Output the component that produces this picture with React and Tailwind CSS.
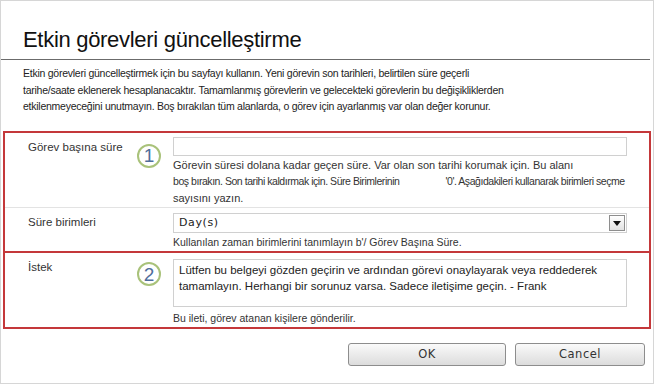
import React from 'react'

const font = { fontFamily: '"Liberation Sans", Arial, sans-serif' }

const Step = ({ n }) => (
  <div className="w-[24px] h-[24px] rounded-full border-2 border-[#a9c27a] bg-white flex items-center justify-center text-[19px] leading-none text-[#4f6d9a] font-light">
    {n}
  </div>
)

const Row = ({ label, step, stepTop, children, last }) => (
  <div className={`flex ${last ? '' : 'border-b border-[#e3e3e3]'}`}>
    <div className="w-[168px] shrink-0 flex pl-[23px] pr-[12px] pt-[5px]">
      <div className="flex-1 text-[11.5px] text-[#333] pt-[1px]">{label}</div>
      {step && <div className={stepTop}><Step n={step} /></div>}
    </div>
    <div className="flex-1 pr-[22px]">{children}</div>
  </div>
)

export default function App() {
  return (
    <div className="w-[654px] h-[384px] bg-white border border-[#d6d6d6] overflow-hidden text-[#222]" style={font}>
      <div className="pt-[26px] pl-[22px] pb-[6px] border-b border-[#6b6b6b] mr-[3px]">
        <h1 className="text-[22px] leading-[26px] text-[#111] tracking-[-0.3px]">Etkin görevleri güncelleştirme</h1>
      </div>
      <div className="pl-[22px] pt-[5px] text-[10.5px] leading-[16.5px] text-[#222] tracking-[-0.25px]">
        <p>Etkin görevleri güncelleştirmek için bu sayfayı kullanın. Yeni görevin son tarihleri, belirtilen süre geçerli</p>
        <p>tarihe/saate eklenerek hesaplanacaktır. Tamamlanmış görevlerin ve gelecekteki görevlerin bu değişikliklerden</p>
        <p>etkilenmeyeceğini unutmayın. Boş bırakılan tüm alanlarda, o görev için ayarlanmış var olan değer korunur.</p>
      </div>

      <div className="mx-[2px] mt-[16px] border-2 border-[#c4383a]">
        <Row label="Görev başına süre" step="1" stepTop="pt-[6px]">
          <div className="pt-[4px]">
            <div className="h-[19px] border border-[#d0d0d0] bg-white" />
            <div className="text-[11px] leading-[16.5px] text-[#333] pt-[1px] pb-[1px]">
              <p>Görevin süresi dolana kadar geçen süre. Var olan son tarihi korumak için. Bu alanı</p>
              <p className="whitespace-nowrap text-[10.5px] tracking-[-0.45px]">boş bırakın. Son tarihi kaldırmak için. Süre Birimlerinin<span className="inline-block w-[46px]" />'0'. Aşağıdakileri kullanarak birimleri seçme</p>
              <p>sayısını yazın.</p>
            </div>
          </div>
        </Row>
        <Row label="Süre birimleri" last>
          <div className="pt-[5px] pb-[1px]">
            <div className="h-[20px] border border-[#d0d0d0] bg-white flex items-center justify-between pl-[5px] pr-[1px]">
              <span className="text-[11px] tracking-[0.6px] text-[#222]" style={{ fontFamily: '"DejaVu Sans", sans-serif' }}>Day(s)</span>
              <div className="w-[16px] h-[16px] border border-[#8e8e8e] bg-gradient-to-b from-white to-[#e2e2e2] flex items-center justify-center">
                <svg width="8" height="5" viewBox="0 0 8 5"><path d="M0 0h8L4 5z" fill="#111" /></svg>
              </div>
            </div>
            <p className="text-[10.5px] leading-[16px] text-[#333] pt-[1px]">Kullanılan zaman birimlerini tanımlayın b'/ Görev Başına Süre.</p>
          </div>
        </Row>
      </div>

      <div className="mx-[2px] border-2 border-t-0 border-[#c4383a]">
        <Row label="İstek" step="2" stepTop="pt-[4px]" last>
          <div className="pt-[6px] pb-[1px]">
            <div className="h-[48px] border border-[#d0d0d0] bg-white px-[5px] pt-[2px] text-[11.5px] leading-[16px] text-[#222]">
              <p>Lütfen bu belgeyi gözden geçirin ve ardından görevi onaylayarak veya reddederek</p>
              <p>tamamlayın. Herhangi bir sorunuz varsa. Sadece iletişime geçin. - Frank</p>
            </div>
            <p className="text-[10.5px] leading-[16px] text-[#333] pt-[3px]">Bu ileti, görev atanan kişilere gönderilir.</p>
          </div>
        </Row>
      </div>

      <div className="flex justify-end gap-[9px] pr-[8px] pt-[14px]">
        <button className="w-[158px] h-[23px] rounded-[3px] border border-[#8d8d8d] bg-gradient-to-b from-[#fafafa] to-[#dcdcdc] text-[11.5px] text-[#333] tracking-[0.5px]" style={{ fontFamily: '"DejaVu Sans", sans-serif' }}>OK</button>
        <button className="w-[130px] h-[23px] rounded-[3px] border border-[#8d8d8d] bg-gradient-to-b from-[#fafafa] to-[#dcdcdc] text-[11.5px] text-[#333] tracking-[0.5px]" style={{ fontFamily: '"DejaVu Sans", sans-serif' }}>Cancel</button>
      </div>
    </div>
  )
}
